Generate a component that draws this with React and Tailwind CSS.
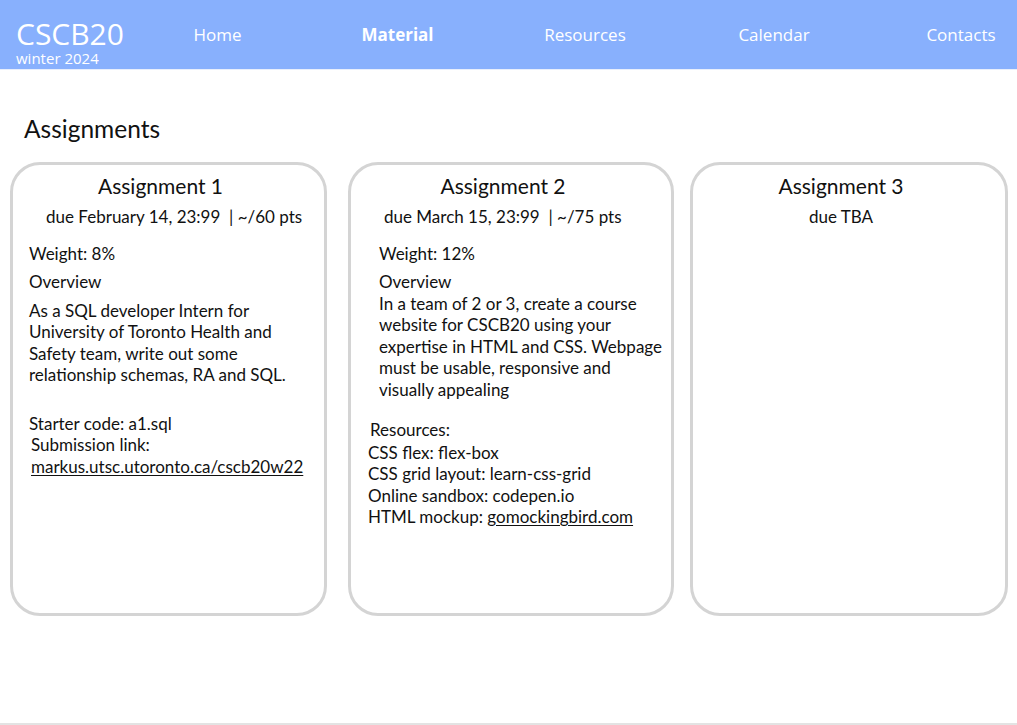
import React from "react";

const navItems = [
  { label: "Home", w: "w-[95px]" },
  { label: "Material", w: "w-[265px]", bold: true },
  { label: "Resources", w: "w-[110px]" },
  { label: "Calendar", w: "w-[268px]" },
  { label: "Contacts", w: "w-[106px]" },
];

export default function App() {
  return (
    <div className="min-h-[725px] bg-white font-['Lato','Open_Sans',sans-serif] text-[#111] border-b-2 border-[#e3e3e3] flex flex-col">
      {/* Header */}
      <header className="h-[70px] bg-[#88b0fd] border-b border-[#e8eefc] flex items-start text-white font-['Open_Sans',sans-serif]">
        <div className="pl-4 pt-[18px] flex flex-col w-[170px]">
          <span className="text-[30px] leading-[32px]">CSCB20</span>
          <span className="text-[15px] leading-[17px]">winter 2024</span>
        </div>
        <nav className="self-center flex items-center text-[17px] mt-[1px]">
          {navItems.map((n) => (
            <span key={n.label} className={`text-center ${n.w} ${n.bold ? "font-bold" : ""}`}>{n.label}</span>
          ))}
        </nav>
      </header>

      <main className="pt-[44px]">
        <h1 className="pl-[24px] text-[24.5px] leading-[30px]">Assignments</h1>

        <div className="flex mt-[18px] pl-[10px] text-[17px] leading-[21.5px]">
          {/* Assignment 1 */}
          <section className="w-[317px] h-[454px] border-[3px] border-[#d4d4d4] rounded-[30px] pt-[7px]">
            <h2 className="text-center pr-[16px] text-[21px] leading-[28px]">Assignment 1</h2>
            <p className="pl-[33px] mt-[6px]">due February 14, 23:99&nbsp; | ~/60 pts</p>
            <div className="pl-[16px] mt-[15px]">
              <p>Weight: 8%</p>
              <p className="mt-[7px]">Overview</p>
              <p className="mt-[7px] w-[285px]">
                As a SQL developer Intern for University of Toronto Health and Safety team, write out some relationship schemas, RA and SQL.
              </p>
              <p className="mt-[27px]">Starter code: a1.sql</p>
              <p className="pl-[2px]">Submission link:</p>
              <p className="pl-[2px] underline underline-offset-2">markus.utsc.utoronto.ca/cscb20w22</p>
            </div>
          </section>

          {/* Assignment 2 */}
          <section className="ml-[21px] w-[326px] h-[454px] border-[3px] border-[#d4d4d4] rounded-[30px] pt-[7px]">
            <h2 className="text-center pr-[16px] text-[21px] leading-[28px]">Assignment 2</h2>
            <p className="pl-[33px] mt-[6px]">due March 15, 23:99&nbsp; | ~/75 pts</p>
            <div className="pl-[28px] mt-[15px]">
              <p>Weight: 12%</p>
              <p className="mt-[7px]">Overview</p>
              <p className="w-[288px]">
                In a team of 2 or 3, create a course website for CSCB20 using your expertise in HTML and CSS. Webpage must be usable, responsive and visually appealing
              </p>
            </div>
            <div className="pl-[17px] mt-[19px]">
              <p className="pl-[2px]">Resources:</p>
              <p className="mt-[1px]">CSS flex: flex-box</p>
              <p>CSS grid layout: learn-css-grid</p>
              <p>Online sandbox: codepen.io</p>
              <p>
                HTML mockup: <span className="underline underline-offset-2">gomockingbird.com</span>
              </p>
            </div>
          </section>

          {/* Assignment 3 */}
          <section className="ml-[16px] w-[318px] h-[454px] border-[3px] border-[#d4d4d4] rounded-[30px] pt-[7px]">
            <h2 className="text-center pr-[16px] text-[21px] leading-[28px]">Assignment 3</h2>
            <p className="text-center pr-[16px] mt-[6px]">due TBA</p>
          </section>
        </div>
      </main>
    </div>
  );
}
